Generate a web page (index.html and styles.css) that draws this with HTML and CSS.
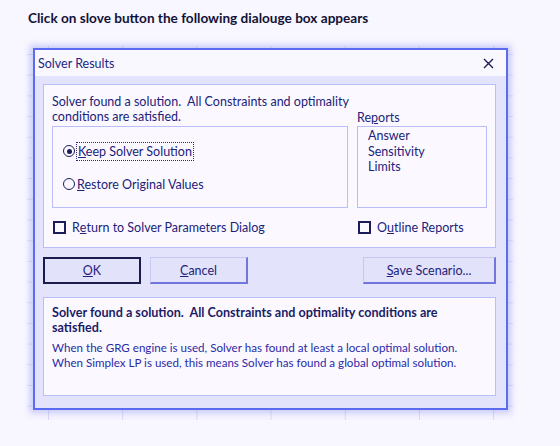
FILE: index.html
```html
<!DOCTYPE html>
<html lang="en">
<head>
  <meta charset="UTF-8">
  <title>Solver Results</title>
  <link rel="stylesheet" href="styles.css">
</head>
<body>
  <h1 class="intro">Click on slove button the following dialouge box appears</h1>

  <div class="sheet">
    <div class="dialog">
      <div class="titlebar">
        <span class="title">Solver Results</span>
        <svg class="close" width="11" height="11" viewBox="0 0 11 11">
          <path d="M1 1 L10 10 M10 1 L1 10" stroke="#1b1b55" stroke-width="1.4" fill="none"/>
        </svg>
      </div>

      <div class="body">
        <div class="panel top">
          <div class="msg">Solver found a solution.&nbsp; All Constraints and optimality<br>conditions are satisfied.</div>
          <div class="label">Re<u>p</u>orts</div>

          <div class="box options">
            <label class="radio">
              <span class="dot checked"></span>
              <span class="focus"><u>K</u>eep Solver Solution</span>
            </label>
            <label class="radio">
              <span class="dot"></span>
              <span><u>R</u>estore Original Values</span>
            </label>
          </div>
          <div class="box reports">
            <div>Answer</div>
            <div>Sensitivity</div>
            <div>Limits</div>
          </div>

          <label class="check"><span class="tick"></span>R<u>e</u>turn to Solver Parameters Dialog</label>
          <label class="check"><span class="tick"></span>O<u>u</u>tline Reports</label>
        </div>

        <div class="buttons">
          <button class="btn default"><u>O</u>K</button>
          <button class="btn"><u>C</u>ancel</button>
          <span class="spacer"></span>
          <button class="btn wide"><u>S</u>ave Scenario...</button>
        </div>

        <div class="panel bottom">
          <p class="strong">Solver found a solution.&nbsp; All Constraints and optimality conditions are satisfied.</p>
          <p class="note">When the GRG engine is used, Solver has found at least a local optimal solution.<br>When Simplex LP is used, this means Solver has found a global optimal solution.</p>
        </div>
      </div>
    </div>
  </div>
</body>
</html>
```

FILE: styles.css
```css
body {
  margin: 0;
  background-color: #f8f6fe;
  font-family: 'Lato', 'Open Sans', sans-serif;
  color: #22227a;
}
.intro {
  margin: 0;
  padding: 10px 0 0 28px;
  height: 46px;
  box-sizing: border-box;
  font-size: 13.6px;
  font-weight: bold;
  color: #121238;
}
.sheet {
  margin-left: 27px;
  width: 486px;
  height: 374px;
  padding: 2px 5px 0 6px;
  box-sizing: border-box;
  background-color: #f6f4fe;
  background-image:
    linear-gradient(to right, #d6d8f8 1px, transparent 1px),
    linear-gradient(to bottom, #dcdef8 1px, transparent 1px);
  background-size: 74.2px 100%, 100% 20.7px;
  background-position: 21px 0, 0 8px;
}
.dialog {
  width: 475px;
  height: 362px;
  box-sizing: border-box;
  border: 2px solid #5b6cf0;
  background-color: #e3e3fb;
  box-shadow: 0 0 6px 3px rgba(120, 130, 240, 0.35);
}
.titlebar {
  height: 26px;
  display: flex;
  align-items: center;
  justify-content: space-between;
  padding: 0 12px 0 3px;
  background-color: #f9f8ff;
}
.title {
  font-size: 12.5px;
  color: #25257e;
}
.close {
  display: block;
}
.body {
  padding: 8px 10px 0 8px;
}
.panel {
  background-color: #fbf9ff;
  border: 1px solid #babef6;
}
.top {
  height: 164px;
  box-sizing: border-box;
  padding: 9px 8px 0 8px;
  display: grid;
  grid-template-columns: 296px 130px;
  grid-template-rows: 32px 82px 30px;
  column-gap: 9px;
  font-size: 12.5px;
}
.msg {
  line-height: 15px;
  white-space: nowrap;
}
.label {
  align-self: end;
  line-height: 15px;
  padding-bottom: 1px;
}
.box {
  border: 1px solid #babef6;
  background-color: #fbf9ff;
}
.options {
  padding: 15px 0 0 10px;
  display: flex;
  flex-direction: column;
  gap: 15px;
}
.radio {
  display: flex;
  align-items: center;
  height: 18px;
}
.dot {
  width: 10px;
  height: 10px;
  border: 1.5px solid #1c1c58;
  border-radius: 50%;
  margin-right: 2px;
  display: flex;
  align-items: center;
  justify-content: center;
}
.dot.checked::after {
  content: "";
  width: 5px;
  height: 5px;
  border-radius: 50%;
  background-color: #1c1c58;
}
.focus {
  outline: 1px dotted #2a2a80;
  padding: 1px 1px;
}
.reports {
  padding: 1px 0 0 10px;
  line-height: 15.5px;
}
.check {
  display: flex;
  align-items: center;
  align-self: center;
  margin-top: 8px;
}
.tick {
  width: 9px;
  height: 9px;
  border: 2px solid #1c1c58;
  margin: 0 6px 0 1px;
}
.buttons {
  display: flex;
  gap: 9px;
  height: 27px;
  margin: 9px 0 13px;
}
.spacer {
  flex: 1;
}
.btn {
  width: 98px;
  height: 27px;
  font-family: inherit;
  font-size: 12.5px;
  color: #22227a;
  background-color: #e2e2fb;
  border: 1px solid #c6c8f6;
  border-right: 2px solid #7076dc;
  border-bottom: 2px solid #7076dc;
  padding: 0;
}
.btn.default {
  border: 2px solid #1b1b4e;
}
.btn.wide {
  width: 133px;
}
.bottom {
  height: 99px;
  box-sizing: border-box;
  padding: 7px 8px 0 8px;
}
.strong {
  margin: 0;
  font-size: 12.6px;
  font-weight: bold;
  line-height: 15px;
  color: #1c1c66;
}
.note {
  margin: 5px 0 0;
  font-size: 11.6px;
  line-height: 15px;
  color: #2a2aa6;
}
```
